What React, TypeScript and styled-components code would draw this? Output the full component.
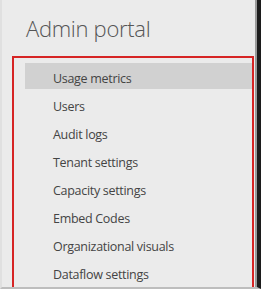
import React from "react";
import styled, { createGlobalStyle } from "styled-components";

const GlobalStyle = createGlobalStyle`
  html, body {
    margin: 0;
    padding: 0;
    background: #ebebeb;
  }
`;

const items = [
  "Usage metrics",
  "Users",
  "Audit logs",
  "Tenant settings",
  "Capacity settings",
  "Embed Codes",
  "Organizational visuals",
  "Dataflow settings",
];

const App = () => {
  return (
    <>
      <GlobalStyle />
      <Page>
        <Title>Admin portal</Title>
        <Highlight>
          <Menu>
            {items.map((label, i) => (
              <MenuItem key={label} $active={i === 0}>
                {label}
              </MenuItem>
            ))}
          </Menu>
        </Highlight>
      </Page>
    </>
  );
};

const Page = styled.div`
  width: 261px;
  height: 289px;
  box-sizing: border-box;
  overflow: hidden;
  background: #ebebeb;
  border-left: 2px solid #e0e0e0;
  border-right: 4px solid #1c1c1c;
  border-bottom: 2px solid #bdbdbd;
  box-shadow: inset -2px 0 0 #9a9a9a;
  display: flex;
  flex-direction: column;
`;

const Title = styled.h1`
  margin: 0;
  padding: 13px 0 0 24px;
  height: 44px;
  box-sizing: border-box;
  font-family: "Open Sans", "Noto Sans", sans-serif;
  font-weight: 300;
  font-size: 22px;
  line-height: 30px;
  color: #555555;
  letter-spacing: -0.3px;
`;

const Highlight = styled.div`
  margin: 12px 0 0 10px;
  width: 242px;
  flex: 1;
  box-sizing: border-box;
  border: 2px solid #d62424;
  border-bottom: none;
  padding: 5px 0 0 11px;
`;

const Menu = styled.ul`
  list-style: none;
  margin: 0;
  padding: 0;
  display: flex;
  flex-direction: column;
`;

const MenuItem = styled.li<{ $active?: boolean }>`
  height: ${(p) => (p.$active ? "26px" : "28px")};
  margin-bottom: ${(p) => (p.$active ? "2px" : "0")};
  box-sizing: border-box;
  padding: 5px 0 0 28px;
  line-height: 22px;
  font-family: "Open Sans", "Noto Sans", sans-serif;
  font-size: 12.5px;
  color: #444444;
  letter-spacing: -0.3px;
  white-space: nowrap;
  background: ${(p) => (p.$active ? "#d1d1d1" : "transparent")};
`;

export default App;
